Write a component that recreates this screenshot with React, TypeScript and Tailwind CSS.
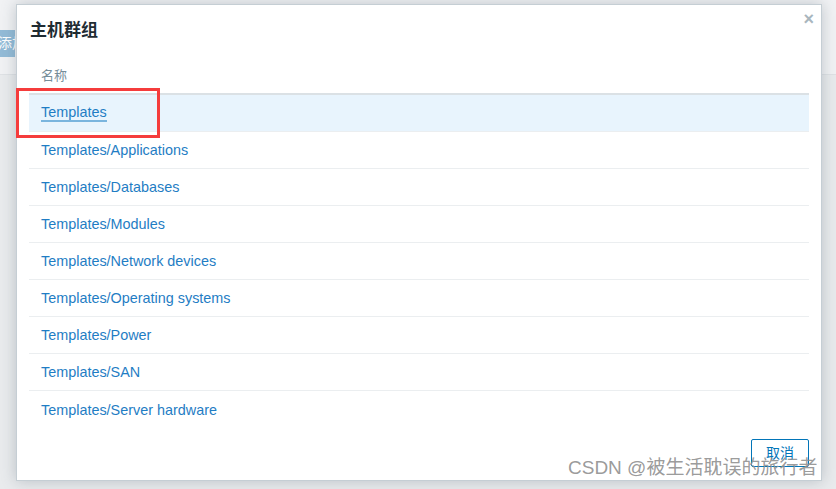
import React from 'react';

const groups = [
  'Templates',
  'Templates/Applications',
  'Templates/Databases',
  'Templates/Modules',
  'Templates/Network devices',
  'Templates/Operating systems',
  'Templates/Power',
  'Templates/SAN',
  'Templates/Server hardware',
];

export default function App() {
  return (
    <div
      className="relative w-[836px] h-[489px] overflow-hidden bg-[#e9ebed]"
      style={{ fontFamily: '"Liberation Sans", Arial, "Noto Sans CJK SC", sans-serif' }}
    >
      {/* page behind the overlay */}
      <div className="h-[75px] border-b border-[#dfe2e5] bg-[#f1f2f4] pt-[30px]">
        <div className="w-[15px] h-[27px] overflow-hidden bg-[#93bbd7] text-white text-[14px] leading-[27px] whitespace-nowrap">
          <span className="ml-[-2px]">添加</span>
        </div>
      </div>

      {/* modal */}
      <div className="absolute left-[16px] top-[4px] w-[806px] h-[477px] bg-white border border-[#c5ced4] shadow-[0_0_14px_rgba(60,80,95,0.28)] flex flex-col">
        <div className="relative h-[53px] pl-[13px] pt-[14px]">
          <h2 className="text-[17px] font-bold text-[#1f2c33] leading-[24px]">主机群组</h2>
          <button className="absolute right-[7px] top-[5px] text-[#a9b6be] text-[18px] leading-none font-bold">
            ×
          </button>
        </div>

        <div className="px-[12px] flex-1">
          <div className="h-[37px] border-b-2 border-[#dbe1e5] pl-[12px] flex items-center text-[13px] text-[#768d99]">
            名称
          </div>
          {groups.map((g, i) => (
            <div
              key={g}
              className={
                'h-[37px] pl-[12px] flex items-center text-[14.4px] ' +
                (i === 0 ? 'bg-[#e8f4fd] ' : '') +
                (i < groups.length - 1 ? 'border-b border-[#ebeef0]' : '')
              }
            >
              <span
                className={
                  'text-[#1f7dc4] leading-[16px] ' +
                  (i === 0 ? 'border-b-2 border-[#7ab5de]' : '')
                }
              >
                {g}
              </span>
            </div>
          ))}
        </div>

        <div className="flex justify-end pr-[12px] pb-[13px]">
          <button className="h-[28px] w-[58px] border border-[#0275b8] rounded-[2px] text-[#0275b8] text-[14px] bg-white">
            取消
          </button>
        </div>
      </div>

      {/* highlight annotation */}
      <div className="absolute left-[16px] top-[88px] w-[144px] h-[50px] border-[3px] border-[#f53c3c]" />

      {/* watermark */}
      <div
        className="absolute left-[568px] top-[455px] text-[19px] leading-[26px] text-[#8e8e8e]/90 whitespace-nowrap"
        style={{ fontFamily: '"Liberation Sans", "Noto Sans CJK SC", sans-serif' }}
      >
        CSDN @被生活耽误的旅行者
      </div>
    </div>
  );
}
